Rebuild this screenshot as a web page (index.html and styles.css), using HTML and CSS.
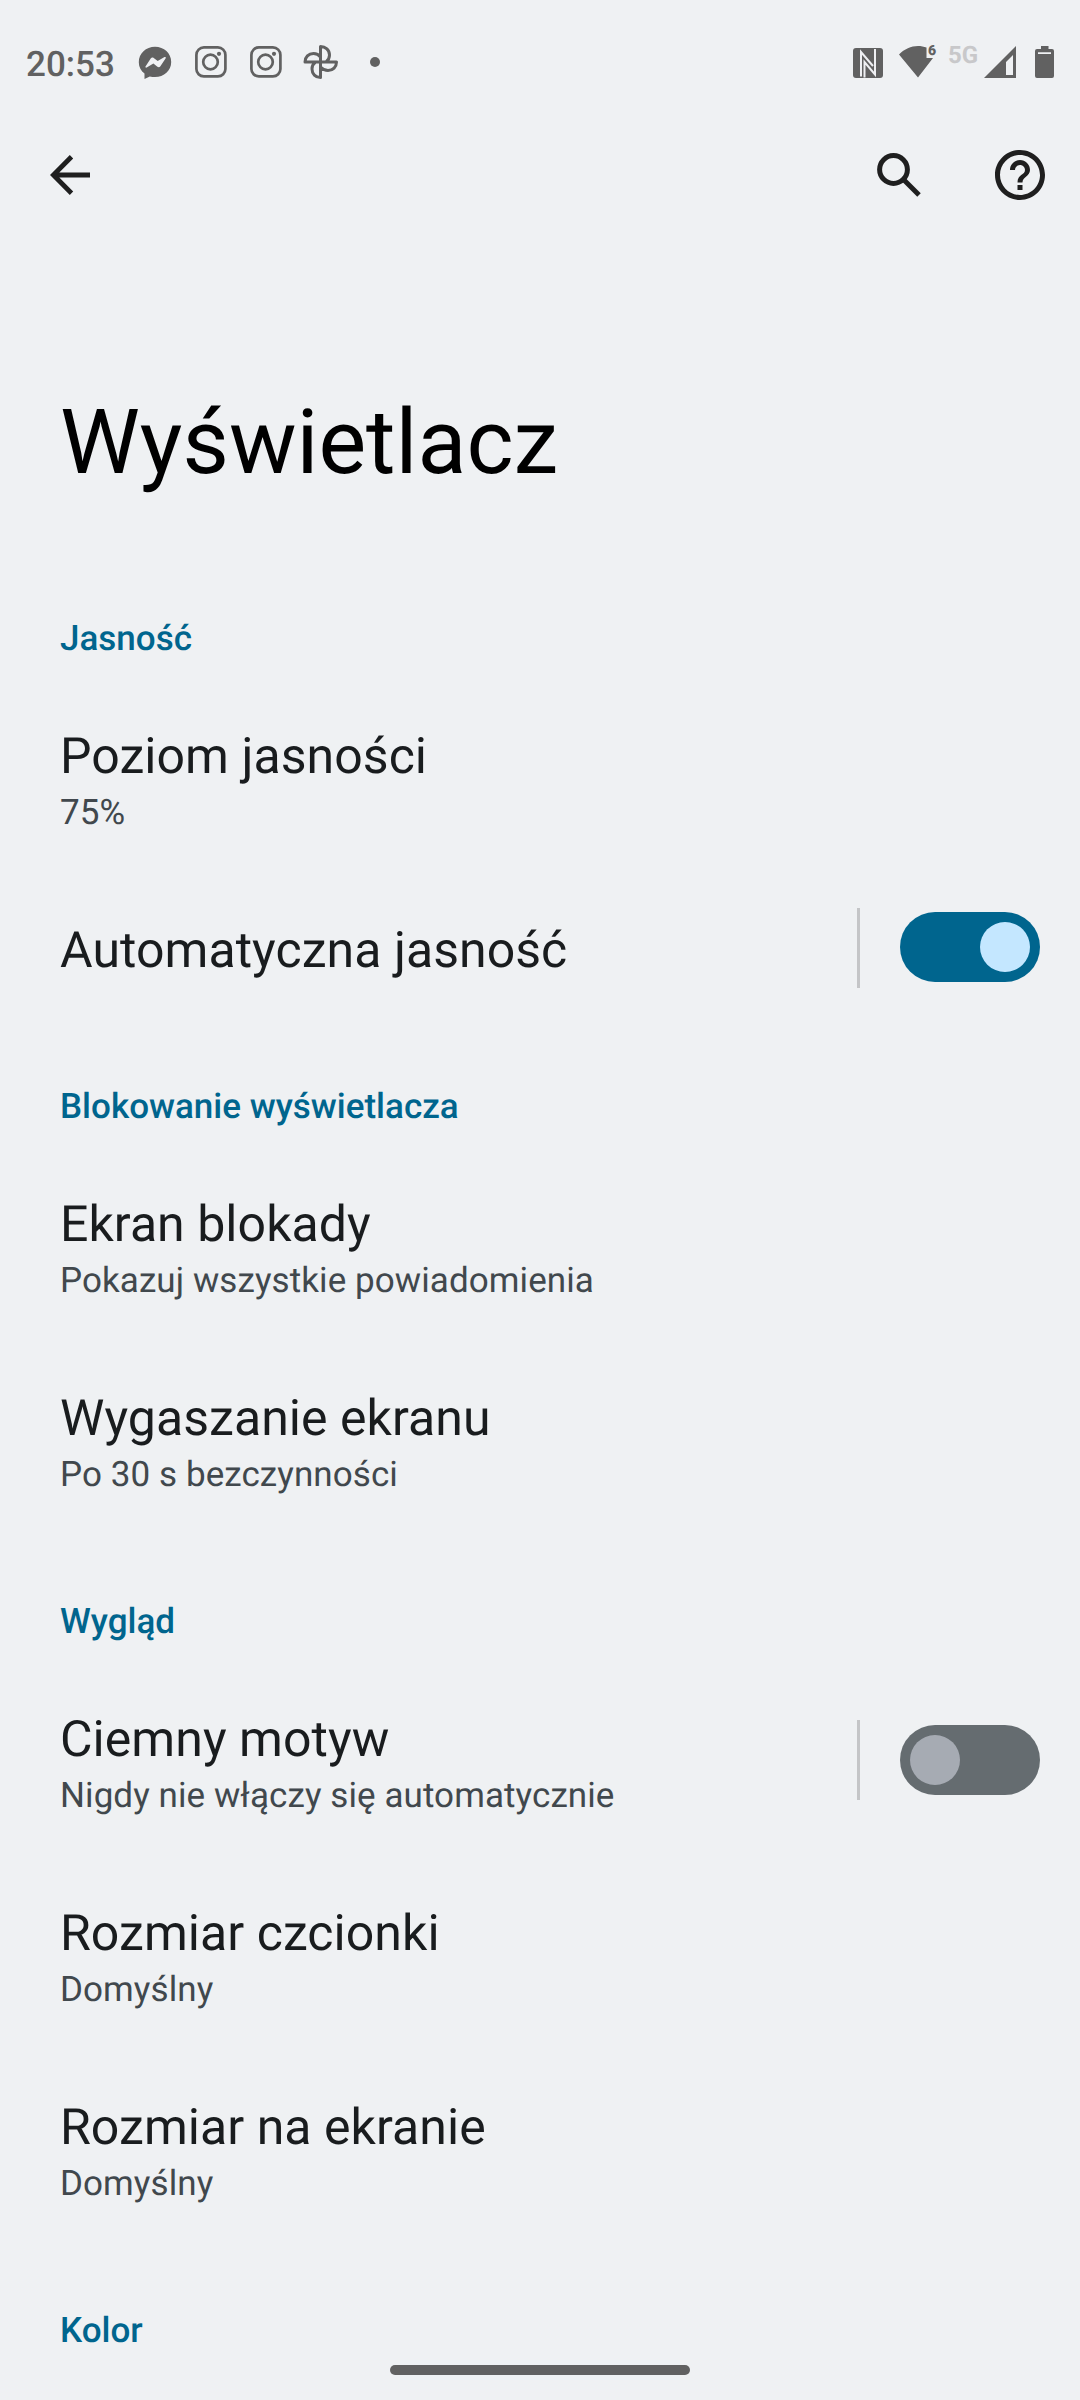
FILE: index.html
```html
<!DOCTYPE html>
<html lang="pl">
<head>
<meta charset="utf-8">
<title>Wyświetlacz</title>
<link rel="stylesheet" href="styles.css">
</head>
<body>
<header class="status">
  <span class="clock">20:53</span>
  <svg class="messenger" width="34" height="34" viewBox="0 0 34 34"><path fill="#616161" d="M17 .8C8 .8.800 7.400.800 16.200c0 5 2.300 8.800 5.700 11.400V33l5.300-2.600c1.600.4 3.400.7 5.200.7 9 0 16.200-6.400 16.200-15.100S26 .8 17 .8z"/><path fill="#eff0f3" d="m7.500 20.500 5.200-8.100c.8-1.100 2-1.300 3-.5l4 3.200 6.800-4c.9-.4 1.700.4 1.200 1.200l-5.300 7.900c-.8 1.100-2 1.300-3 .5l-4-3.100-6.700 4c-.9.400-1.700-.3-1.200-1.100z"/></svg>
  <svg class="insta" width="32" height="32" viewBox="0 0 32 32" fill="none" stroke="#616161" stroke-width="2.700"><rect x="1.400" y="1.400" width="29" height="29" rx="7.500"/><circle cx="15.500" cy="16" r="7.300"/><circle cx="24" cy="7.800" r="2.100" fill="#616161" stroke="none"/></svg>
  <svg class="insta" width="32" height="32" viewBox="0 0 32 32" fill="none" stroke="#616161" stroke-width="2.700"><rect x="1.400" y="1.400" width="29" height="29" rx="7.500"/><circle cx="15.500" cy="16" r="7.300"/><circle cx="24" cy="7.800" r="2.100" fill="#616161" stroke="none"/></svg>
  <svg class="photos" width="36" height="36" viewBox="0 0 36 36" fill="none" stroke="#616161" stroke-width="3" stroke-linejoin="round"><path d="M17.500 18V2.500c5 0 9 3.600 9 8.500 0 3-1.500 5.500-3.500 7M17.500 18h16c0 5-3.600 8.500-8.500 8.500-3 0-5.500-1.500-7.500-3.500M17.500 18v15.500c-5 0-8.500-3.600-8.500-8.500 0-3 1.500-5.500 3.500-7M17.500 18H2c0-5 3.600-8.500 8.500-8.500 3 0 5.500 1.500 7 3.500"/></svg>
  <span class="dot"></span>
  <span class="spacer"></span>
  <svg class="nfc" width="30" height="30" viewBox="0 0 30 30"><rect width="30" height="30" rx="3" fill="#616161"/><path d="M8 28.500V4L20 18M22 1v25.500L11.500 14v15.500" fill="none" stroke="#eff0f3" stroke-width="2"/></svg>
  <span class="wifi"><svg width="38" height="32" viewBox="0 0 38 32"><path fill="#616161" d="M0 8.500C5.500 3 12 0 19 0c3 0 6 .6 8.500 1.600V12H34L19 31.500z"/></svg><b>6</b></span>
  <span class="net">5G</span>
  <svg class="signal" width="32" height="32" viewBox="0 0 32 32"><path fill="#616161" fill-rule="evenodd" d="M32 0v32H0zM29 9l-7 7v13h7z"/></svg>
  <svg class="battery" width="19" height="32" viewBox="0 0 19 32"><path fill="#616161" fill-rule="evenodd" d="M6 0h7.500v3H17a2 2 0 0 1 2 2v25a2 2 0 0 1-2 2H2a2 2 0 0 1-2-2V5a2 2 0 0 1 2-2h4zM3 6.300V8h13V6.300z"/></svg>
</header>
<nav class="toolbar">
  <svg class="back" width="40" height="40" viewBox="0 0 40 40" fill="none" stroke="#1f1f1f" stroke-width="4.800"><path d="M21.500 1.800 3.400 20l18.100 18.200M3.500 20H40"/></svg>
  <span class="spacer"></span>
  <svg class="search" width="44" height="44" viewBox="0 0 44 44" fill="none" stroke="#1f1f1f" stroke-width="5"><circle cx="16.500" cy="16.500" r="13.900"/><path d="m26.500 26.500 15.500 15.500"/></svg>
  <svg class="help" width="50" height="50" viewBox="2 2 20 20" fill="#1f1f1f"><path d="M11 18h2v-2h-2v2zm1-16C6.480 2 2 6.480 2 12s4.480 10 10 10 10-4.480 10-10S17.520 2 12 2zm0 18c-4.410 0-8-3.590-8-8s3.590-8 8-8 8 3.590 8 8-3.590 8-8 8zm0-14c-2.210 0-4 1.790-4 4h2c0-1.100.9-2 2-2s2 .9 2 2c0 2-3 1.750-3 5h2c0-2.250 3-2.500 3-5 0-2.210-1.790-4-4-4z"/></svg>
</nav>
<main>
  <h1>Wyświetlacz</h1>
  <section>
    <h2>Jasność</h2>
    <div class="item"><div class="text"><h3>Poziom jasności</h3><p>75%</p></div></div>
    <div class="item single"><div class="text"><h3>Automatyczna jasność</h3></div><i class="rule"></i><span class="switch on"><i></i></span></div>
  </section>
  <section>
    <h2>Blokowanie wyświetlacza</h2>
    <div class="item"><div class="text"><h3>Ekran blokady</h3><p>Pokazuj wszystkie powiadomienia</p></div></div>
    <div class="item"><div class="text"><h3>Wygaszanie ekranu</h3><p>Po 30 s bezczynności</p></div></div>
  </section>
  <section>
    <h2>Wygląd</h2>
    <div class="item"><div class="text"><h3>Ciemny motyw</h3><p>Nigdy nie włączy się automatycznie</p></div><i class="rule"></i><span class="switch"><i></i></span></div>
    <div class="item"><div class="text"><h3>Rozmiar czcionki</h3><p>Domyślny</p></div></div>
    <div class="item"><div class="text"><h3>Rozmiar na ekranie</h3><p>Domyślny</p></div></div>
  </section>
  <section>
    <h2>Kolor</h2>
  </section>
</main>
<div class="handle"></div>
</body>
</html>
```
FILE: styles.css
```css
* { box-sizing: border-box; margin: 0; padding: 0; }
body {
  position: relative;
  width: 1080px;
  height: 2400px;
  overflow: hidden;
  background: #eff1f3;
  font-family: Roboto, sans-serif;
  color: #191c1e;
  text-rendering: geometricPrecision;
}
svg { display: block; flex: none; }
.spacer { flex: 1; }

.status {
  display: flex;
  align-items: flex-start;
  height: 126px;
  padding: 0 26px;
  color: #616161;
}
.clock { width: 112px; margin-top: 44px; font-size: 35px; line-height: 42px; font-weight: 500; }
.messenger { margin-top: 46px; }
.insta { margin: 46px 0 0 23px; }
.photos { margin: 44px 0 0 21px; }
.dot { width: 10px; height: 10px; margin: 57px 0 0 31px; border-radius: 50%; background: #616161; }
.nfc { margin-top: 48px; }
.wifi { position: relative; margin: 46px 0 0 16px; }
.wifi b { position: absolute; left: 29px; top: -3px; font-size: 14px; line-height: 16px; font-weight: 900; }
.net { width: 36px; margin: 41px 0 0 11px; font-size: 24px; line-height: 28px; font-weight: 700; color: #c8c8ca; }
.signal { margin-top: 46px; }
.battery { margin: 46px 0 0 19px; }

.toolbar { display: flex; align-items: center; height: 98px; padding: 0 35px 0 50px; }
.help { margin-left: 74px; }

h1 { margin: 166px 0 0 60px; font-size: 90px; line-height: 106px; font-weight: 400; color: #000; }
section { padding-bottom: 64px; }
h1 + section { padding-top: 121px; }
h2 { height: 63px; padding: 1px 0 0 60px; font-size: 35px; line-height: 42px; font-weight: 500; color: #00658e; }
.item { display: flex; align-items: center; height: 194px; padding: 0 40px 0 60px; }
.text { flex: 1; padding-top: 8px; }
.single { height: 147px; }
.single .text { padding-top: 6px; }
h3 { font-size: 50px; line-height: 58px; font-weight: 400; letter-spacing: 0.05px; }
p { margin-top: 6px; font-size: 35px; line-height: 42px; letter-spacing: 0.08px; color: #41484d; }
.rule { width: 3px; height: 80px; margin-right: 40px; background: #c4c5c7; }
.switch { display: flex; width: 140px; height: 70px; padding: 10px; border-radius: 35px; background: #656c70; }
.switch i { width: 50px; height: 50px; border-radius: 50%; background: #a6abb3; }
.switch.on { justify-content: flex-end; margin-bottom: 1px; background: #00658e; }
.switch.on i { background: #c4e7ff; }
.handle { position: absolute; left: 390px; top: 2365px; width: 300px; height: 10px; border-radius: 5px; background: #616161; }
```
